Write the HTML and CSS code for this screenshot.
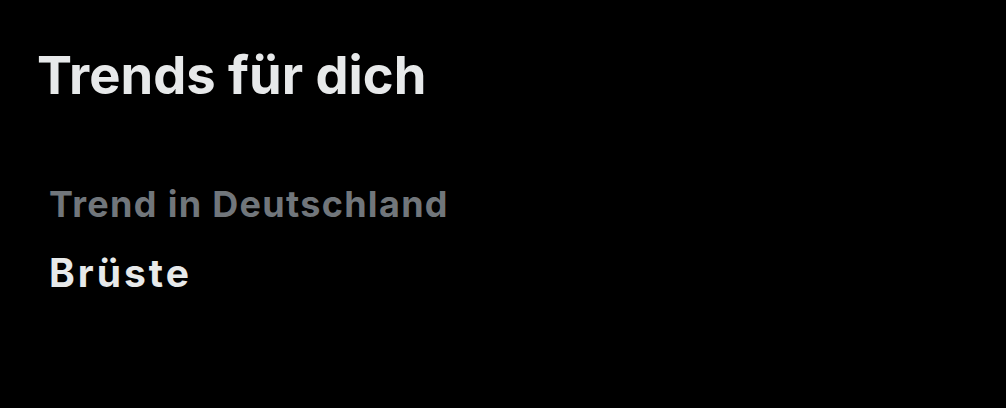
FILE: index.html
```html
<!DOCTYPE html>
<html lang="de">
<head>
<meta charset="utf-8">
<link rel="stylesheet" href="styles.css">
</head>
<body>
<main class="panel">
  <h1 class="title">Trends für dich</h1>
  <section class="trend">
    <div class="meta">Trend in Deutschland</div>
    <div class="name">Brüste</div>
  </section>
</main>
</body>
</html>
```
FILE: styles.css
```css
html, body {
  margin: 0;
  padding: 0;
  background: #000;
  width: 1006px;
  height: 408px;
  overflow: hidden;
}
.panel {
  padding: 44px 0 0 37px;
  display: flex;
  flex-direction: column;
}
.title {
  margin: 0;
  font-family: "Inter", sans-serif;
  font-weight: 700;
  font-size: 52.5px;
  line-height: 62px;
  color: #e7e9ea;
}
.trend {
  margin-top: 76px;
  padding-left: 12px;
  display: flex;
  flex-direction: column;
}
.meta {
  font-family: "Inter", sans-serif;
  font-weight: 700;
  font-size: 36px;
  line-height: 44px;
  letter-spacing: 1.3px;
  color: #71767b;
}
.name {
  margin-top: 25px;
  font-family: "Inter", sans-serif;
  font-weight: 700;
  font-size: 39px;
  line-height: 44px;
  letter-spacing: 3px;
  color: #e7e9ea;
}
```
